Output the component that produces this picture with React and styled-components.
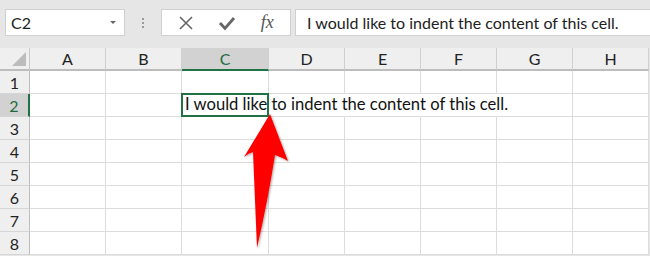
import React from "react";
import styled, { createGlobalStyle } from "styled-components";

const GlobalStyle = createGlobalStyle`
  body {
    margin: 0;
    background: #ffffff;
    font-family: Lato, "Open Sans", "Liberation Sans", sans-serif;
  }
`;

const Sheet = styled.div`
  position: relative;
  width: 650px;
  height: 256px;
  overflow: hidden;
  background: #e6e6e6;
`;

const Toolbar = styled.div`
  display: flex;
  align-items: stretch;
  height: 27px;
  padding: 9px 0 0 5px;
  margin-bottom: 12px;
`;

const NameBox = styled.div`
  width: 120px;
  box-sizing: border-box;
  background: #fff;
  border: 1px solid #d0d0d0;
  display: flex;
  align-items: center;
  justify-content: space-between;
  padding: 0 8px 0 5px;
  font-size: 16px;
  color: #222;
`;

const Caret = styled.span`
  width: 0;
  height: 0;
  border-left: 3px solid transparent;
  border-right: 3px solid transparent;
  border-top: 3px solid #666;
`;

const Grip = styled.div`
  width: 36px;
  display: flex;
  flex-direction: column;
  align-items: center;
  justify-content: center;
  gap: 2px;
  & span {
    width: 2px;
    height: 2px;
    background: #9a9a9a;
  }
`;

const ButtonsBox = styled.div`
  width: 130px;
  box-sizing: border-box;
  background: #fff;
  border: 1px solid #d0d0d0;
  display: flex;
  align-items: center;
  justify-content: space-around;
  padding: 0 4px;
  margin-right: 4px;
`;

const Fx = styled.span`
  font-family: "Liberation Serif", serif;
  font-style: italic;
  font-size: 18px;
  color: #555;
`;

const FormulaBox = styled.div`
  flex: 1;
  background: #fff;
  border: 1px solid #d0d0d0;
  border-right: none;
  display: flex;
  align-items: center;
  padding-left: 11px;
  font-size: 16px;
  color: #222;
  white-space: nowrap;
`;

const Grid = styled.div`
  display: grid;
  grid-template-columns: 30px 76px 76px 87px 76px 76px 76px 76px 76px;
  grid-auto-rows: 23px;
  width: 649px;
  background: #fff;
`;

const Corner = styled.div`
  background: #efefef;
  border-right: 1px solid #c9c9c9;
  border-bottom: 2px solid #bdbdbd;
  position: relative;
  &::after {
    content: "";
    position: absolute;
    right: 3px;
    bottom: 3px;
    border-left: 14px solid transparent;
    border-bottom: 14px solid #bcbcbc;
  }
`;

const ColHead = styled.div`
  background: ${(p) => (p.$active ? "#d2d2d2" : "#efefef")};
  border-right: 1px solid #cfcfcf;
  border-bottom: 2px solid ${(p) => (p.$active ? "#217346" : "#bdbdbd")};
  display: flex;
  align-items: center;
  justify-content: center;
  font-size: 16px;
  color: ${(p) => (p.$active ? "#1e6b41" : "#222")};
`;

const RowHead = styled.div`
  background: ${(p) => (p.$active ? "#d2d2d2" : "#efefef")};
  border-right: ${(p) => (p.$active ? "2px solid #217346" : "1px solid #bdbdbd")};
  border-bottom: 1px solid #d6d6d6;
  display: flex;
  align-items: center;
  justify-content: center;
  font-size: 16px;
  color: ${(p) => (p.$active ? "#1e6b41" : "#222")};
`;

const Cell = styled.div`
  background: #fff;
  border-right: 1px solid ${(p) => (p.$open ? "#fff" : "#dcdcdc")};
  border-bottom: 1px solid #dcdcdc;
`;

const ActiveCell = styled.div`
  position: relative;
  z-index: 2;
  border: 2px solid #217346;
  margin: -1px 0 0 -1px;
  padding: 0 0 0 2px;
  display: flex;
  align-items: flex-end;
  font-size: 16.6px;
  line-height: 21px;
  color: #111;
  white-space: nowrap;
  overflow: visible;
`;

const Arrow = styled.svg`
  position: absolute;
  left: 0;
  top: 0;
  z-index: 5;
  pointer-events: none;
`;

const cols = ["A", "B", "C", "D", "E", "F", "G", "H"];
const rows = [1, 2, 3, 4, 5, 6, 7, 8];
const text = "I would like to indent the content of this cell.";

export default function App() {
  return (
    <>
      <GlobalStyle />
      <Sheet>
        <Toolbar>
          <NameBox>
            C2
            <Caret />
          </NameBox>
          <Grip>
            <span />
            <span />
            <span />
          </Grip>
          <ButtonsBox>
            <svg width="16" height="16" viewBox="0 0 16 16">
              <path d="M2 2 L14 14 M14 2 L2 14" stroke="#666" strokeWidth="1.6" fill="none" />
            </svg>
            <svg width="18" height="16" viewBox="0 0 18 16">
              <path d="M2 8 L7 13.5 L16 3" stroke="#666" strokeWidth="2.8" fill="none" />
            </svg>
            <Fx>fx</Fx>
          </ButtonsBox>
          <FormulaBox>{text}</FormulaBox>
        </Toolbar>
        <Grid>
          <Corner />
          {cols.map((c) => (
            <ColHead key={c} $active={c === "C"}>
              {c}
            </ColHead>
          ))}
          {rows.map((r) => (
            <React.Fragment key={r}>
              <RowHead $active={r === 2}>{r}</RowHead>
              {cols.map((c) =>
                r === 2 && c === "C" ? (
                  <ActiveCell key={c}>{text}</ActiveCell>
                ) : (
                  <Cell key={c} $open={r === 2 && ["D", "E", "F"].includes(c)} />
                )
              )}
            </React.Fragment>
          ))}
        </Grid>
        <Arrow width="650" height="256" viewBox="0 0 650 256">
          <defs>
            <filter id="sh" x="-50%" y="-20%" width="200%" height="140%">
              <feDropShadow dx="1" dy="1" stdDeviation="1.2" floodColor="#000" floodOpacity="0.35" />
            </filter>
          </defs>
          <path
            d="M270 114 L288 161 Q281 157 275 155 Q268 200 257 248 Q255 200 253 152 Q249 153 244 157 Z"
            fill="#ff0000"
            filter="url(#sh)"
          />
        </Arrow>
      </Sheet>
    </>
  );
}
